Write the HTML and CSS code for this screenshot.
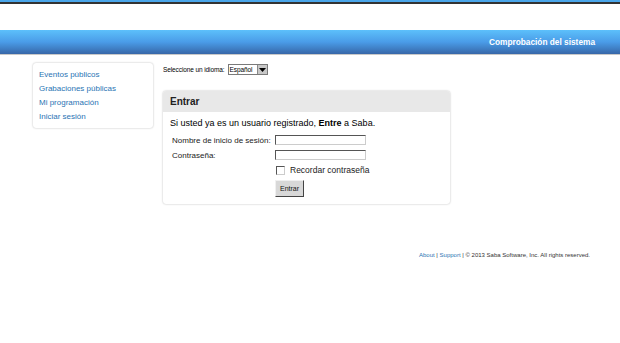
FILE: index.html
```html
<!DOCTYPE html>
<html lang="es">
  <head>
    <meta charset="UTF-8" />
    <title>Saba - Entrar</title>
    <link rel="stylesheet" href="styles.css">
  </head>
  <body>
    <div class="top-strip"></div>
    <div class="header-bar">
      <span class="header-title">Comprobación del sistema</span>
    </div>
    <div class="page">
      <div class="sidebar">
        <a href="#">Eventos públicos</a>
        <a href="#">Grabaciones públicas</a>
        <a href="#">Mi programación</a>
        <a href="#">Iniciar sesión</a>
      </div>
      <div class="main">
        <div class="lang-row">
          <span>Seleccione un idioma:</span>
          <span class="select">
            <span class="select-value">Español</span>
            <span class="select-arrow">
              <svg width="7" height="4" viewBox="0 0 7 4"><path d="M0 0H7L3.5 4Z" fill="#000"/></svg>
            </span>
          </span>
        </div>
        <div class="login-panel">
          <div class="panel-head">Entrar</div>
          <div class="panel-body">
            <p class="intro">Si usted ya es un usuario registrado, <b>Entre</b> a Saba.</p>
            <div class="form-grid">
              <label>Nombre de inicio de sesión:</label>
              <span class="field"></span>
              <label>Contraseña:</label>
              <span class="field"></span>
              <span></span>
              <span class="remember"><span class="checkbox"></span>Recordar contraseña</span>
              <span></span>
              <span><span class="btn">Entrar</span></span>
            </div>
          </div>
        </div>
      </div>
    </div>
    <div class="footer">
      <a href="#">About</a> | <a href="#">Support</a> | © 2013 Saba Software, Inc. All rights reserved.
    </div>
  </body>
</html>
```

FILE: styles.css
```css
body {
  margin: 0;
  font-family: "Liberation Sans", Arial, sans-serif;
  background: #fff;
  color: #000;
}

.top-strip {
  height: 2px;
  background: #4aa6ea;
  border-bottom: 2px solid #333;
}

.header-bar {
  margin-top: 26px;
  height: 24px;
  background: linear-gradient(#5cc0fb, #4a9ce8 50%, #3767a8);
  border-bottom: 1px solid #c8c8c8;
  display: flex;
  align-items: center;
  justify-content: flex-end;
  padding-right: 25px;
}

.header-title {
  color: #fff;
  font-size: 8.3px;
  font-weight: bold;
}

.page {
  display: flex;
  padding: 8px 0 0 33px;
  gap: 10px;
}

.sidebar {
  width: 120px;
  height: 65px;
  box-sizing: border-box;
  border-radius: 3px;
  box-shadow: 0 0 2px rgba(0, 0, 0, 0.3);
  padding: 6px 6px;
  display: flex;
  flex-direction: column;
  gap: 3px;
}

.sidebar a {
  color: #2a74b4;
  font-size: 8px;
  text-decoration: none;
  line-height: 11px;
}

.main {
  width: 287px;
}

.lang-row {
  display: flex;
  align-items: center;
  gap: 3px;
  font-size: 6.5px;
  padding-top: 1px;
  letter-spacing: -0.1px;
}

.select {
  display: inline-flex;
  border: 1px solid #7a7a7a;
  height: 11px;
  box-sizing: border-box;
  background: #fff;
}

.select-value {
  font-size: 6.5px;
  line-height: 9px;
  padding: 0 1px;
  width: 26px;
}

.select-arrow {
  width: 9px;
  background: #c8c8c8;
  border-left: 1px solid #888;
  display: flex;
  align-items: center;
  justify-content: center;
}

.login-panel {
  margin-top: 16px;
  border-radius: 3px;
  box-shadow: 0 0 2px rgba(0, 0, 0, 0.3);
  overflow: hidden;
}

.panel-head {
  background: #e8e8e8;
  height: 21px;
  line-height: 21px;
  padding-left: 7px;
  font-size: 10px;
  font-weight: bold;
  color: #222;
}

.panel-body {
  padding: 5px 6px 7px 7px;
  font-size: 9px;
}

.intro {
  margin: 0 0 6px;
  line-height: 12px;
}

.form-grid {
  display: grid;
  grid-template-columns: 103px 1fr;
  row-gap: 5px;
  padding-left: 2px;
  align-items: center;
}

.form-grid label {
  font-size: 8px;
  color: #222;
  white-space: nowrap;
}

.field {
  width: 91px;
  height: 10px;
  box-sizing: border-box;
  border: 1px solid #555;
  border-right-color: #ccc;
  border-bottom-color: #ccc;
  display: block;
}

.remember {
  display: flex;
  align-items: center;
  gap: 5px;
  font-size: 8.5px;
  color: #222;
}

.checkbox {
  width: 7px;
  height: 7px;
  border: 1px solid #555;
  border-right-color: #ccc;
  border-bottom-color: #ccc;
  margin-left: 1px;
}

.btn {
  display: inline-block;
  background: #d8d8d8;
  border: 1px solid #f0f0f0;
  border-right-color: #444;
  border-bottom-color: #444;
  font-size: 7px;
  padding: 4px 4px;
  color: #111;
}

.footer {
  margin-top: 48px;
  text-align: right;
  padding-right: 30px;
  font-size: 6px;
  color: #333;
}

.footer a {
  color: #2a74b4;
  text-decoration: none;
}
```
